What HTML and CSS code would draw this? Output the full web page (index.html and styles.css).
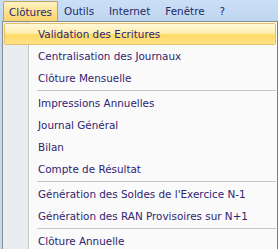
FILE: index.html
```html
<!DOCTYPE html>
<html>
<head>
<meta charset="utf-8">
<link rel="stylesheet" href="styles.css">
</head>
<body>
<div class="menubar">
  <span class="top active">Clôtures</span>
  <span class="top">Outils</span>
  <span class="top">Internet</span>
  <span class="top">Fenêtre</span>
  <span class="top">?</span>
</div>
<div class="menu">
  <div class="item hot">Validation des Ecritures</div>
  <div class="item">Centralisation des Journaux</div>
  <div class="item">Clôture Mensuelle</div>
  <div class="sep"></div>
  <div class="item">Impressions Annuelles</div>
  <div class="item">Journal Général</div>
  <div class="item">Bilan</div>
  <div class="item">Compte de Résultat</div>
  <div class="sep"></div>
  <div class="item">Génération des Soldes de l'Exercice N-1</div>
  <div class="item">Génération des RAN Provisoires sur N+1</div>
  <div class="sep"></div>
  <div class="item">Clôture Annuelle</div>
</div>
</body>
</html>
```
FILE: styles.css
```css
html, body {
  margin: 0;
  padding: 0;
  width: 278px;
  height: 249px;
  overflow: hidden;
  background: #c4d9f0;
  font-family: "DejaVu Sans", sans-serif;
  font-size: 10.4px;
  color: #1f2f6b;
}
.menubar {
  display: flex;
  align-items: stretch;
  height: 21px;
  padding-left: 3px;
  background: linear-gradient(#cbdff5, #bfd6f0);
}
.top {
  display: flex;
  align-items: center;
  padding: 0 5px;
  margin-right: 3px;
  border: 1px solid transparent;
  border-bottom: none;
  color: #1d2a6b;
}
.top.active {
  border-color: #c8a15a;
  border-radius: 2px 2px 0 0;
  background: linear-gradient(#fff3c8, #fde08a 55%, #fbd46c);
  margin-top: 1px;
  margin-right: 0;
}
.menu {
  margin-left: 2px;
  width: 272px;
  border: 1px solid #8d8d8d;
  border-right: 2px solid #7a7a7a;
  padding: 1px;
  background:
    linear-gradient(to right, #e9edf1 0, #e9edf1 25px, #c5c5c5 25px, #c5c5c5 26px, #fff 26px, #fff 27px, #fafafa 27px);
  min-height: 240px;
}
.item {
  height: 20px;
  line-height: 21px;
  padding-left: 33px;
  border: 1px solid transparent;
  border-radius: 2px;
  color: #2f2470;
  white-space: nowrap;
}
.item.hot {
  border-color: #e5c265;
  background: linear-gradient(#fff8d9 0%, #ffeeb0 45%, #ffd965 55%, #ffe38a 100%);
}
.sep {
  height: 1px;
  margin: 1px 0 1px 33px;
  background: #c5c5c5;
}
```
